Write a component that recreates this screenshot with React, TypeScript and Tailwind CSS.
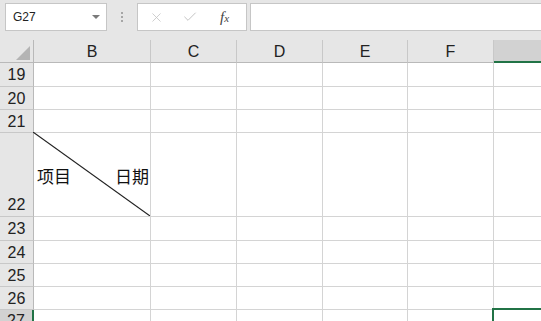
import { X, Check } from 'lucide-react'

const cols = ['B', 'C', 'D', 'E', 'F', 'G']
const rows = [19, 20, 21, 22, 23, 24, 25, 26, 27]

function FormulaBar() {
  return (
    <div className="flex h-[40px] items-start pt-[3px]">
      <div className="ml-[5px] flex h-[28px] w-[102px] items-center justify-between border border-[#c6c6c6] bg-white pl-[7px] pr-[6px]">
        <span className="text-[12px] text-[#222]">G27</span>
        <svg width="8" height="4" viewBox="0 0 8 4">
          <polygon points="0,0 8,0 4,4" fill="#7a7a7a" />
        </svg>
      </div>
      <div className="flex h-[28px] w-[30px] flex-col items-center justify-center gap-[2px]">
        <span className="h-[2px] w-[2px] bg-[#a6a6a6]" />
        <span className="h-[2px] w-[2px] bg-[#a6a6a6]" />
        <span className="h-[2px] w-[2px] bg-[#a6a6a6]" />
      </div>
      <div className="flex h-[28px] w-[110px] items-center border border-[#c6c6c6] bg-white">
        <X size={15} strokeWidth={1.3} color="#c4c4c4" className="ml-[11px]" />
        <Check size={16} strokeWidth={1.5} color="#c4c4c4" className="ml-[18px]" />
        <span className="ml-[22px] font-['Liberation_Serif',serif] text-[15px] italic leading-none text-[#444]">
          f<span className="text-[11px]">x</span>
        </span>
      </div>
      <div className="ml-[3px] h-[28px] flex-1 border border-r-0 border-[#c6c6c6] bg-white" />
    </div>
  )
}

export default function App() {
  return (
    <div className="relative h-[321px] w-[541px] overflow-hidden bg-[#e6e6e6] font-['Liberation_Sans',sans-serif]">
      <FormulaBar />
      <div className="grid grid-cols-[34px_117px_86px_86px_85px_86px_1fr] grid-rows-[23px_24px_23px_23px_84px_24px_23px_23px_23px_1fr] bg-white">
        {/* corner + column headers */}
        <div className="relative border-b border-r border-[#b9b9b9] bg-[#e6e6e6]">
          <svg className="absolute left-0 top-0" width="33" height="22">
            <polygon points="30,6 30,20 16,20" fill="#b4b4b4" />
          </svg>
        </div>
        {cols.map((c) =>
          c === 'G' ? (
            <div key={c} className="border-b-2 border-[#217346] bg-[#d2d2d2]" />
          ) : (
            <div
              key={c}
              className="flex items-center justify-center border-b border-r border-b-[#b9b9b9] border-r-[#c8c8c8] bg-[#e6e6e6] pt-[1px] text-[16px] text-[#222]"
            >
              {c}
            </div>
          ),
        )}

        {rows.map((r) => (
          <Row key={r} n={r} />
        ))}
      </div>
    </div>
  )
}

function Row({ n }: { n: number }) {
  const selected = n === 27
  const tall = n === 22
  return (
    <>
      <div
        className={
          selected
            ? 'flex justify-center border-r-2 border-[#217346] bg-[#d2d2d2] pt-[3px] text-[16px] leading-none text-[#222]'
            : tall
              ? 'flex items-end justify-center border-b border-r border-b-[#c8c8c8] border-r-[#b9b9b9] bg-[#e6e6e6] pb-[3px] text-[16px] leading-none text-[#222]'
              : 'flex items-center justify-center border-b border-r border-b-[#c8c8c8] border-r-[#b9b9b9] bg-[#e6e6e6] pt-[1px] text-[16px] leading-none text-[#222]'
        }
      >
        {n}
      </div>
      {cols.map((c) => {
        if (tall && c === 'B') {
          return (
            <div
              key={c}
              className="relative flex items-center justify-between border-b border-r border-[#d4d4d4] pl-[3px] pr-[1px] pt-[1px] font-['Noto_Sans_CJK_SC',sans-serif] text-[17px] leading-none text-[#111]"
            >
              <svg className="absolute -left-[1px] -top-[1px] h-[calc(100%+1px)] w-[calc(100%+1px)]">
                <line x1="0" y1="0" x2="100%" y2="100%" stroke="#222" strokeWidth="1.1" />
              </svg>
              <span className="relative">项目</span>
              <span className="relative">日期</span>
            </div>
          )
        }
        if (selected && c === 'G') {
          return (
            <div key={c} className="relative">
              <div className="absolute -left-[2px] -top-[2px] h-[40px] w-[60px] border-l-2 border-t-2 border-[#217346]" />
            </div>
          )
        }
        return <div key={c} className={c === 'G' ? 'border-b border-[#d4d4d4]' : 'border-b border-r border-[#d4d4d4]'} />
      })}
    </>
  )
}
